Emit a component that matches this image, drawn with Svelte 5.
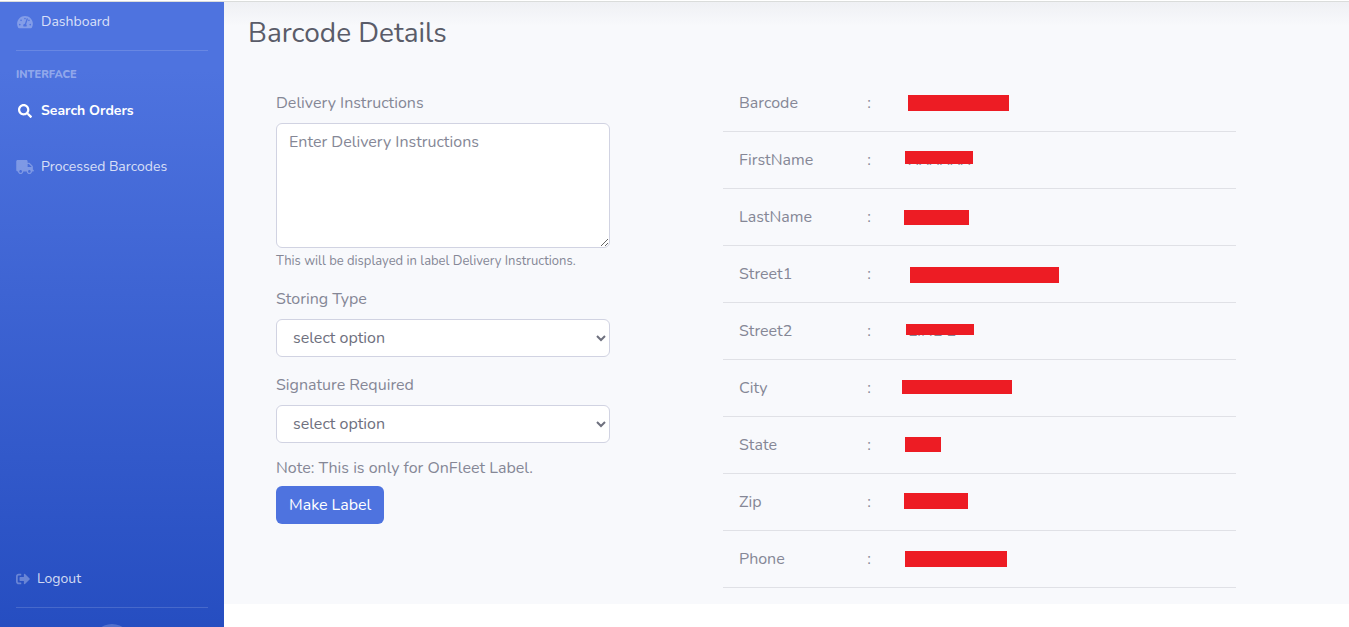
<script lang="ts">
    interface Bar {
        x: number;
        y: number;
        w: number;
        h: number;
    }

    interface Detail {
        name: string;
        value?: string;
        bar: Bar;
    }

    // bar offsets are relative to the start of the value text
    const details: Detail[] = [
        { name: "Barcode", bar: { x: 0, y: 4, w: 101, h: 16 } },
        { name: "FirstName", value: "XXXXXX", bar: { x: -3, y: 3, w: 68, h: 13 } },
        { name: "LastName", bar: { x: -4, y: 5, w: 65, h: 15 } },
        { name: "Street1", bar: { x: 2, y: 5, w: 149, h: 16 } },
        { name: "Street2", value: "LINE 2", bar: { x: -2, y: 5, w: 68, h: 11 } },
        { name: "City", bar: { x: -6, y: 4, w: 110, h: 14 } },
        { name: "State", bar: { x: -3, y: 4, w: 36, h: 15 } },
        { name: "Zip", bar: { x: -4, y: 3, w: 64, h: 16 } },
        { name: "Phone", bar: { x: -3, y: 4, w: 102, h: 16 } },
    ];

    let instructions = $state("");
    let storingType = $state("");
    let signature = $state("");
</script>

<div class="topbar"></div>
<div class="wrapper">
    <nav class="sidebar">
        <a class="nav-link first" href="#dashboard">
            <svg class="icon" viewBox="-32 0 640 512" width="18" height="14">
                <path fill-rule="evenodd" d="M288 32C128.94 32 0 160.94 0 320c0 52.8 14.25 102.26 39.06 144.8 5.61 9.62 16.3 15.2 27.44 15.2h443c11.14 0 21.83-5.58 27.44-15.2C561.75 422.26 576 372.8 576 320c0-159.06-128.94-288-288-288zm0 64c14.71 0 26.58 10.13 30.32 23.65-1.11 2.26-2.64 4.23-3.45 6.67l-9.22 27.67c-5.13 3.49-10.97 6.01-17.64 6.01-17.67 0-32-14.33-32-32S270.33 96 288 96zM96 384c-17.67 0-32-14.33-32-32s14.33-32 32-32 32 14.33 32 32-14.33 32-32 32zm48-160c-17.67 0-32-14.33-32-32s14.33-32 32-32 32 14.33 32 32-14.33 32-32 32zm246.77-72.41l-61.33 184C343.13 347.33 352 364.54 352 384c0 11.72-3.38 22.55-8.88 32H232.88c-5.5-9.45-8.88-20.28-8.88-32 0-33.94 26.5-61.43 59.9-63.59l61.34-184.01c4.17-12.56 17.73-19.45 30.36-15.17 12.57 4.19 19.35 17.79 15.17 30.36zM432 224c-17.67 0-32-14.33-32-32s14.33-32 32-32 32 14.33 32 32-14.33 32-32 32zM480 384c-17.67 0-32-14.33-32-32s14.33-32 32-32 32 14.33 32 32-14.33 32-32 32z" />
            </svg>
            <span>Dashboard</span>
        </a>
        <hr />
        <div class="sidebar-heading">Interface</div>
        <a class="nav-link active" href="#search">
            <svg class="icon" viewBox="-64 0 640 512" width="18" height="14">
                <path d="M505 442.7L405.3 343c-4.5-4.5-10.6-7-17-7H372c27.6-35.3 44-79.7 44-128C416 93.1 322.9 0 208 0S0 93.1 0 208s93.1 208 208 208c48.3 0 92.7-16.4 128-44v16.3c0 6.4 2.5 12.5 7 17l99.7 99.7c9.4 9.4 24.6 9.4 33.9 0l28.3-28.3c9.4-9.4 9.4-24.6.1-34zM208 336c-70.7 0-128-57.2-128-128 0-70.7 57.2-128 128-128 70.7 0 128 57.2 128 128 0 70.7-57.2 128-128 128z" />
            </svg>
            <span>Search Orders</span>
        </a>
        <a class="nav-link" href="#processed">
            <svg class="icon" viewBox="0 0 640 512" width="18" height="14">
                <path d="M624 352h-16V243.9c0-12.7-5.1-24.9-14.1-33.9L494 110.1c-9-9-21.2-14.1-33.9-14.1H416V48c0-26.5-21.5-48-48-48H48C21.5 0 0 21.5 0 48v320c0 26.5 21.5 48 48 48h16c0 53 43 96 96 96s96-43 96-96h128c0 53 43 96 96 96s96-43 96-96h48c8.8 0 16-7.2 16-16v-32c0-8.8-7.2-16-16-16zM160 464c-26.5 0-48-21.5-48-48s21.5-48 48-48 48 21.5 48 48-21.5 48-48 48zm320 0c-26.5 0-48-21.5-48-48s21.5-48 48-48 48 21.5 48 48-21.5 48-48 48zm80-208H416V144h44.1l99.9 99.9V256z" />
            </svg>
            <span>Processed Barcodes</span>
        </a>
        <a class="nav-link logout" href="#logout">
            <svg class="icon" viewBox="0 0 512 512" width="14" height="14">
                <path d="M497 273L329 441c-15 15-41 4.5-41-17v-96H152c-13.3 0-24-10.7-24-24v-96c0-13.3 10.7-24 24-24h136V88c0-21.4 25.9-32 41-17l168 168c9.3 9.4 9.3 24.6 0 34zM192 436v-40c0-6.6-5.4-12-12-12H96c-17.7 0-32-14.3-32-32V160c0-17.7 14.3-32 32-32h84c6.6 0 12-5.4 12-12V76c0-6.6-5.4-12-12-12H96c-53 0-96 43-96 96v192c0 53 43 96 96 96h84c6.6 0 12-5.4 12-12z" />
            </svg>
            <span>Logout</span>
        </a>
        <hr />
        <button class="toggle" type="button" aria-label="Toggle sidebar"></button>
    </nav>

    <div class="content-wrapper">
        <main>
            <h1>Barcode Details</h1>
            <div class="row">
                <form onsubmit={(e) => e.preventDefault()}>
                    <div class="form-group">
                        <label for="instructions">Delivery Instructions</label>
                        <textarea id="instructions" placeholder="Enter Delivery Instructions" bind:value={instructions}></textarea>
                        <small>This will be displayed in label Delivery Instructions.</small>
                    </div>
                    <div class="form-group">
                        <label for="storing">Storing Type</label>
                        <select id="storing" bind:value={storingType}>
                            <option value="">select option</option>
                        </select>
                    </div>
                    <div class="form-group">
                        <label for="signature">Signature Required</label>
                        <select id="signature" bind:value={signature}>
                            <option value="">select option</option>
                        </select>
                    </div>
                    <p class="note">Note: This is only for OnFleet Label.</p>
                    <button class="btn" type="submit">Make Label</button>
                </form>

                <table>
                    <tbody>
                        {#each details as { name, value, bar }}
                            <tr>
                                <th scope="row">{name}</th>
                                <td class="colon">:</td>
                                <td>
                                    <div class="value">
                                        {value ?? "\u00a0"}
                                        <span
                                            class="bar"
                                            style="left: {bar.x}px; top: {bar.y}px; width: {bar.w}px; height: {bar.h}px;"
                                        ></span>
                                    </div>
                                </td>
                            </tr>
                        {/each}
                    </tbody>
                </table>
            </div>
        </main>
    </div>
</div>

<style>
    :global(body) {
        height: 100vh;
        overflow: hidden;
        background: #fff;
        color: #858796;
        font-family: Nunito, Lato, sans-serif;
        font-size: 16px;
        line-height: 24px;
    }

    :global(#app) {
        display: flex;
        flex-direction: column;
        height: 100%;
    }

    * {
        box-sizing: border-box;
    }

    .topbar {
        flex: none;
        height: 2px;
        border-bottom: 1px solid #dadcdb;
    }

    .wrapper {
        display: flex;
        flex: 1;
        min-height: 0;
        overflow: hidden;
    }

    .sidebar {
        display: flex;
        flex: none;
        flex-direction: column;
        width: 224px;
        /* the toggle runs below the fold */
        height: calc(100% + 53px);
        padding-bottom: 16px;
        background: linear-gradient(180deg, #4e73df 10%, #224abe 100%);
    }

    .sidebar hr {
        width: calc(100% - 32px);
        margin: 0 16px 16px;
        border: 0;
        border-top: 1px solid rgba(255, 255, 255, 0.15);
    }

    .sidebar-heading {
        padding: 0 16px;
        color: rgba(255, 255, 255, 0.4);
        font-size: 11px;
        font-weight: 800;
        line-height: 16px;
        text-transform: uppercase;
    }

    .nav-link {
        display: flex;
        align-items: center;
        gap: 7px;
        padding: 16px;
        color: rgba(255, 255, 255, 0.8);
        font-size: 14px;
        text-decoration: none;
    }

    .nav-link.first {
        padding-top: 8px;
    }

    .nav-link.active {
        color: #fff;
        font-weight: 700;
    }

    .nav-link.logout {
        margin-top: auto;
    }

    .icon {
        flex: none;
        fill: rgba(255, 255, 255, 0.3);
    }

    .active .icon {
        fill: #fff;
    }

    .toggle {
        flex: none;
        align-self: center;
        width: 40px;
        height: 40px;
        padding: 0;
        border: 0;
        border-radius: 50%;
        background: rgba(255, 255, 255, 0.2);
    }

    .content-wrapper {
        flex: 1;
        min-width: 0;
    }

    main {
        padding: 14px 24px 16px;
        background: linear-gradient(180deg, #eff0f4, #f8f9fc 24px);
    }

    h1 {
        margin: 0 0 25px;
        color: #5a5c69;
        font-size: 28px;
        font-weight: 400;
        line-height: 34px;
    }

    .row {
        display: grid;
        grid-template-columns: 334fr 513fr;
        column-gap: 113px;
        align-items: start;
        padding: 0 89px 0 28px;
    }

    form {
        padding-top: 16px;
    }

    .form-group {
        display: flex;
        flex-direction: column;
        margin-bottom: 16px;
    }

    label {
        margin-bottom: 8px;
    }

    textarea,
    select {
        width: 100%;
        border: 1px solid #d1d3e2;
        border-radius: 6px;
        background: #fff;
        color: #6e707e;
        font: inherit;
    }

    textarea {
        height: 125px;
        padding: 6px 12px;
        resize: vertical;
    }

    textarea::placeholder {
        color: #858796;
        opacity: 1;
    }

    select {
        height: 38px;
        padding: 6px 12px;
    }

    small {
        margin-top: 4px;
        font-size: 13px;
        line-height: 19px;
    }

    .note {
        margin: -3px 0 6px;
    }

    .btn {
        height: 38px;
        padding: 0 13px;
        border: 0;
        border-radius: 6px;
        background: #4e73df;
        color: #fff;
        font: inherit;
    }

    table {
        width: 100%;
        border-collapse: collapse;
        table-layout: fixed;
    }

    th,
    td {
        padding: 16px;
        border-bottom: 1px solid #e0e1e6;
        font-weight: 400;
        text-align: left;
    }

    th {
        width: 25%;
    }

    .colon {
        width: 8%;
    }

    .value {
        position: relative;
    }

    .bar {
        position: absolute;
        background: #ed1c24;
    }
</style>
